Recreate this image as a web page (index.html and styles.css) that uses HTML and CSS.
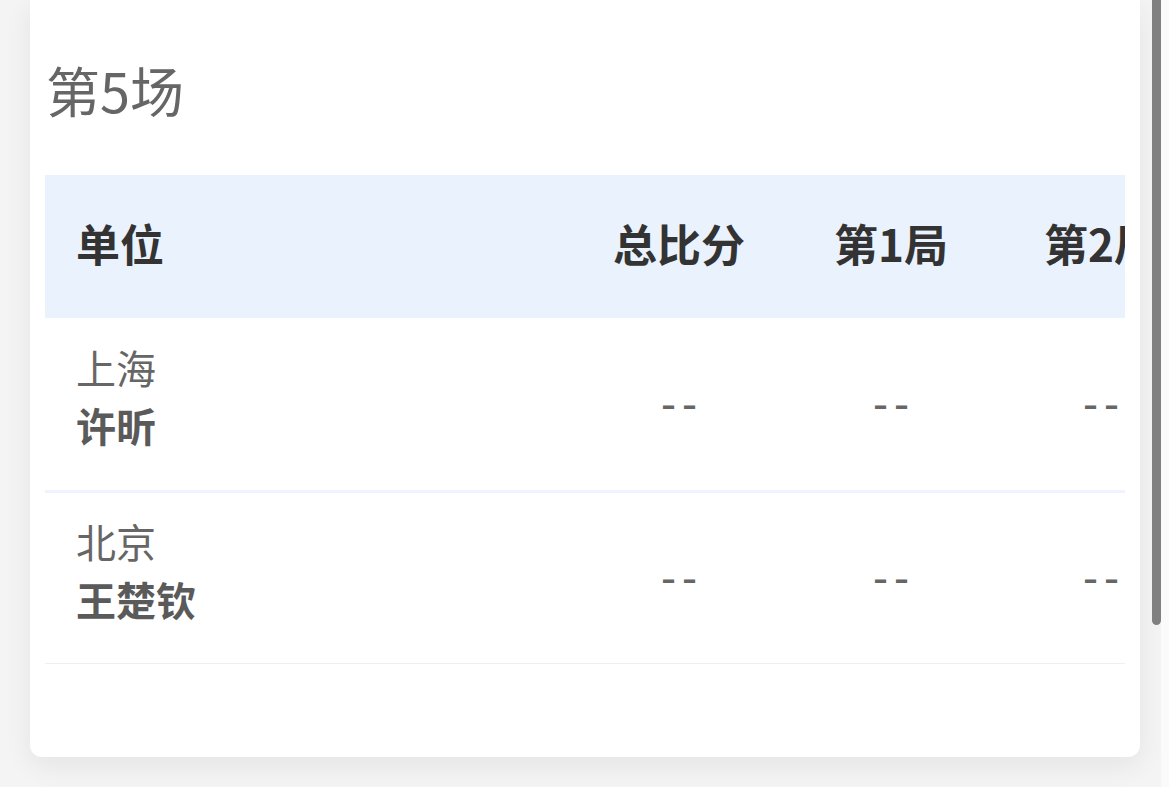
FILE: index.html
```html
<!DOCTYPE html>
<html lang="zh-CN">
<head>
<meta charset="utf-8">
<link rel="stylesheet" href="styles.css">
</head>
<body>
<div class="page">
  <div class="card">
    <h2 class="title">第5场</h2>
    <div class="table-wrap">
      <div class="table">
        <div class="row head">
          <div class="cell first">单位</div>
          <div class="cell">总比分</div>
          <div class="cell">第1局</div>
          <div class="cell last">第2局</div>
        </div>
        <div class="row body sep-blue">
          <div class="cell first">
            <div class="unit">上海</div>
            <div class="name">许昕</div>
          </div>
          <div class="cell dash">--</div>
          <div class="cell dash">--</div>
          <div class="cell dash last">--</div>
        </div>
        <div class="row body sep-gray">
          <div class="cell first">
            <div class="unit">北京</div>
            <div class="name">王楚钦</div>
          </div>
          <div class="cell dash">--</div>
          <div class="cell dash">--</div>
          <div class="cell dash last">--</div>
        </div>
      </div>
    </div>
  </div>
</div>
<div class="track"></div>
<div class="thumb"></div>
</body>
</html>
```

FILE: styles.css
```css
* { box-sizing: border-box; }
html, body {
  margin: 0;
  padding: 0;
  height: 100%;
  overflow: hidden;
}
body {
  background: #f4f4f4;
  font-family: "Noto Sans CJK SC", "Noto Sans", sans-serif;
}
.page {
  padding: 0 29px 0 30px;
}
.card {
  background: #ffffff;
  border-radius: 0 0 12px 12px;
  box-shadow: 0 8px 28px rgba(0, 0, 0, 0.07);
  padding: 50px 15px 93px 15px;
}
.title {
  margin: 0;
  font-size: 54px;
  font-weight: 400;
  color: #666666;
  line-height: 80px;
  padding-left: 1px;
  margin-bottom: 45px;
}
.table-wrap {
  overflow: hidden;
}
.table {
  display: flex;
  flex-direction: column;
}
.row {
  display: grid;
  grid-template-columns: 528px 212px 212px 1fr;
  align-items: center;
}
.head {
  background: #eaf2fd;
  height: 143px;
}
.head .cell {
  font-size: 44px;
  font-weight: 700;
  color: #333333;
  padding-bottom: 7px;
  white-space: nowrap;
}
.cell {
  text-align: center;
}
.cell.first {
  text-align: left;
  padding-left: 31px;
}
.head .cell.last {
  text-align: left;
  padding-left: 47px;
}
.body {
  height: 175px;
}
.body .cell.first {
  padding-bottom: 16px;
}
.sep-blue {
  border-bottom: 3px solid #eef4fd;
}
.sep-gray {
  height: 171px;
  border-bottom: 1px solid #eef0f0;
}
.unit {
  font-size: 40px;
  color: #666666;
  line-height: 58px;
}
.name {
  font-size: 40px;
  font-weight: 700;
  color: #5a5a5a;
  line-height: 58px;
}
.dash {
  font-size: 42px;
  color: #666666;
  letter-spacing: 6px;
  text-indent: 6px;
  padding-bottom: 8px;
  font-weight: 500;
}
.dash.last {
  text-align: right;
  padding-right: 0;
}
.track {
  position: fixed;
  top: 0;
  right: 0;
  width: 8px;
  height: 100%;
  background: #fafafa;
}
.thumb {
  position: fixed;
  top: 0;
  right: 8px;
  width: 9px;
  height: 625px;
  background: #808080;
  border-radius: 0 0 5px 5px;
}
```
